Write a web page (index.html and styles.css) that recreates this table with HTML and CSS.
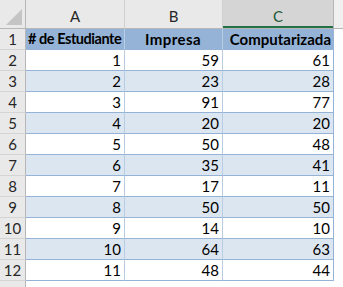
FILE: index.html
```html
<!DOCTYPE html>
<html>
<head>
<meta charset="utf-8">
<link rel="stylesheet" href="styles.css">
</head>
<body>
<div class="sheet">
  <div class="row head">
    <div class="rh corner"><span class="tri"></span></div>
    <div class="ch ca">A</div>
    <div class="ch cb">B</div>
    <div class="ch cc sel">C</div>
    <div class="ch rest"></div>
  </div>
  <div class="row title">
    <div class="rh">1</div>
    <div class="c ca t"># de Estudiante</div>
    <div class="c cb t center">Impresa</div>
    <div class="c cc t wide">Computarizada</div>
    <div class="c rest"></div>
  </div>
  <div class="row w"><div class="rh">2</div><div class="c ca">1</div><div class="c cb">59</div><div class="c cc">61</div><div class="c rest"></div></div>
  <div class="row b"><div class="rh">3</div><div class="c ca">2</div><div class="c cb">23</div><div class="c cc">28</div><div class="c rest"></div></div>
  <div class="row w"><div class="rh">4</div><div class="c ca">3</div><div class="c cb">91</div><div class="c cc">77</div><div class="c rest"></div></div>
  <div class="row b"><div class="rh">5</div><div class="c ca">4</div><div class="c cb">20</div><div class="c cc">20</div><div class="c rest"></div></div>
  <div class="row w"><div class="rh">6</div><div class="c ca">5</div><div class="c cb">50</div><div class="c cc">48</div><div class="c rest"></div></div>
  <div class="row b"><div class="rh">7</div><div class="c ca">6</div><div class="c cb">35</div><div class="c cc">41</div><div class="c rest"></div></div>
  <div class="row w"><div class="rh">8</div><div class="c ca">7</div><div class="c cb">17</div><div class="c cc">11</div><div class="c rest"></div></div>
  <div class="row b"><div class="rh">9</div><div class="c ca">8</div><div class="c cb">50</div><div class="c cc">50</div><div class="c rest"></div></div>
  <div class="row w"><div class="rh">10</div><div class="c ca">9</div><div class="c cb">14</div><div class="c cc">10</div><div class="c rest"></div></div>
  <div class="row b"><div class="rh">11</div><div class="c ca">10</div><div class="c cb">64</div><div class="c cc">63</div><div class="c rest"></div></div>
  <div class="row w"><div class="rh">12</div><div class="c ca">11</div><div class="c cb">48</div><div class="c cc">44</div><div class="c rest"></div></div>
  <div class="row empty"><div class="rh"></div><div class="c ca"></div><div class="c cb"></div><div class="c cc"></div><div class="c rest"></div></div>
</div>
</body>
</html>
```
FILE: styles.css
```css
* { box-sizing: border-box; }
html, body { margin: 0; padding: 0; background: #ffffff; }
body { width: 343px; height: 287px; overflow: hidden; }
.sheet {
  font-family: Lato, "Open Sans", Arial, sans-serif;
  font-size: 15px;
  color: #000;
  width: 343px;
  height: 287px;
  overflow: hidden;
}
.row { display: flex; height: 21px; }
.row.head { height: 29px; }
.rh {
  width: 26px;
  flex: none;
  background: #e9e9e9;
  border-right: 1px solid #b7b7b7;
  border-bottom: 1px solid #d4d4d4;
  color: #262626;
  display: flex;
  align-items: flex-end;
  justify-content: center;
  padding-bottom: 1px;
  line-height: 18px;
}
.corner { position: relative; border-bottom: 1px solid #b7b7b7; }
.tri {
  position: absolute;
  right: 3px;
  bottom: 3px;
  width: 0; height: 0;
  border-left: 16px solid transparent;
  border-bottom: 16px solid #c4c4c4;
}
.ch {
  background: #e9e9e9;
  border-right: 1px solid #d0d0d0;
  border-bottom: 1px solid #b7b7b7;
  color: #262626;
  display: flex;
  align-items: flex-end;
  justify-content: center;
  padding-bottom: 3px;
  line-height: 18px;
  flex: none;
}
.ch.sel {
  background: #d5d5d5;
  border-right-color: #b7b7b7;
  box-shadow: inset 0 -2px 0 #217346;
  color: #1e5a38;
}
.ch.rest { flex: 1; border-right: none; background: #f0f0f0; }
.ca { width: 99px; }
.cb { width: 98px; }
.cc { width: 111px; }
.c {
  flex: none;
  border-right: 1px solid #b8cce4;
  border-bottom: 1px solid #95b3d7;
  display: flex;
  align-items: flex-end;
  justify-content: flex-end;
  padding: 0 3px 1px 2px;
  line-height: 18px;
  white-space: nowrap;
}
.c.cc { border-right-color: #95b3d7; }
.c.rest { flex: 1; border: none; background: #fff; }
.title .c {
  background: #95b3d7;
  font-weight: bold;
  font-size: 14.5px;
  letter-spacing: -0.45px;
}
.title .c.rest { background: #fff; }
.title .t.ca { justify-content: flex-start; padding-left: 2px; }
.title .t.center { justify-content: center; font-size: 15px; letter-spacing: 0.4px; }
.title .t.wide { font-size: 15px; letter-spacing: 0; padding-right: 2px; }
.b .c { background: #dce6f1; }
.b .c.rest { background: #fff; }
.empty .c { border: none; }
.empty .rh { border-bottom: none; }
```
